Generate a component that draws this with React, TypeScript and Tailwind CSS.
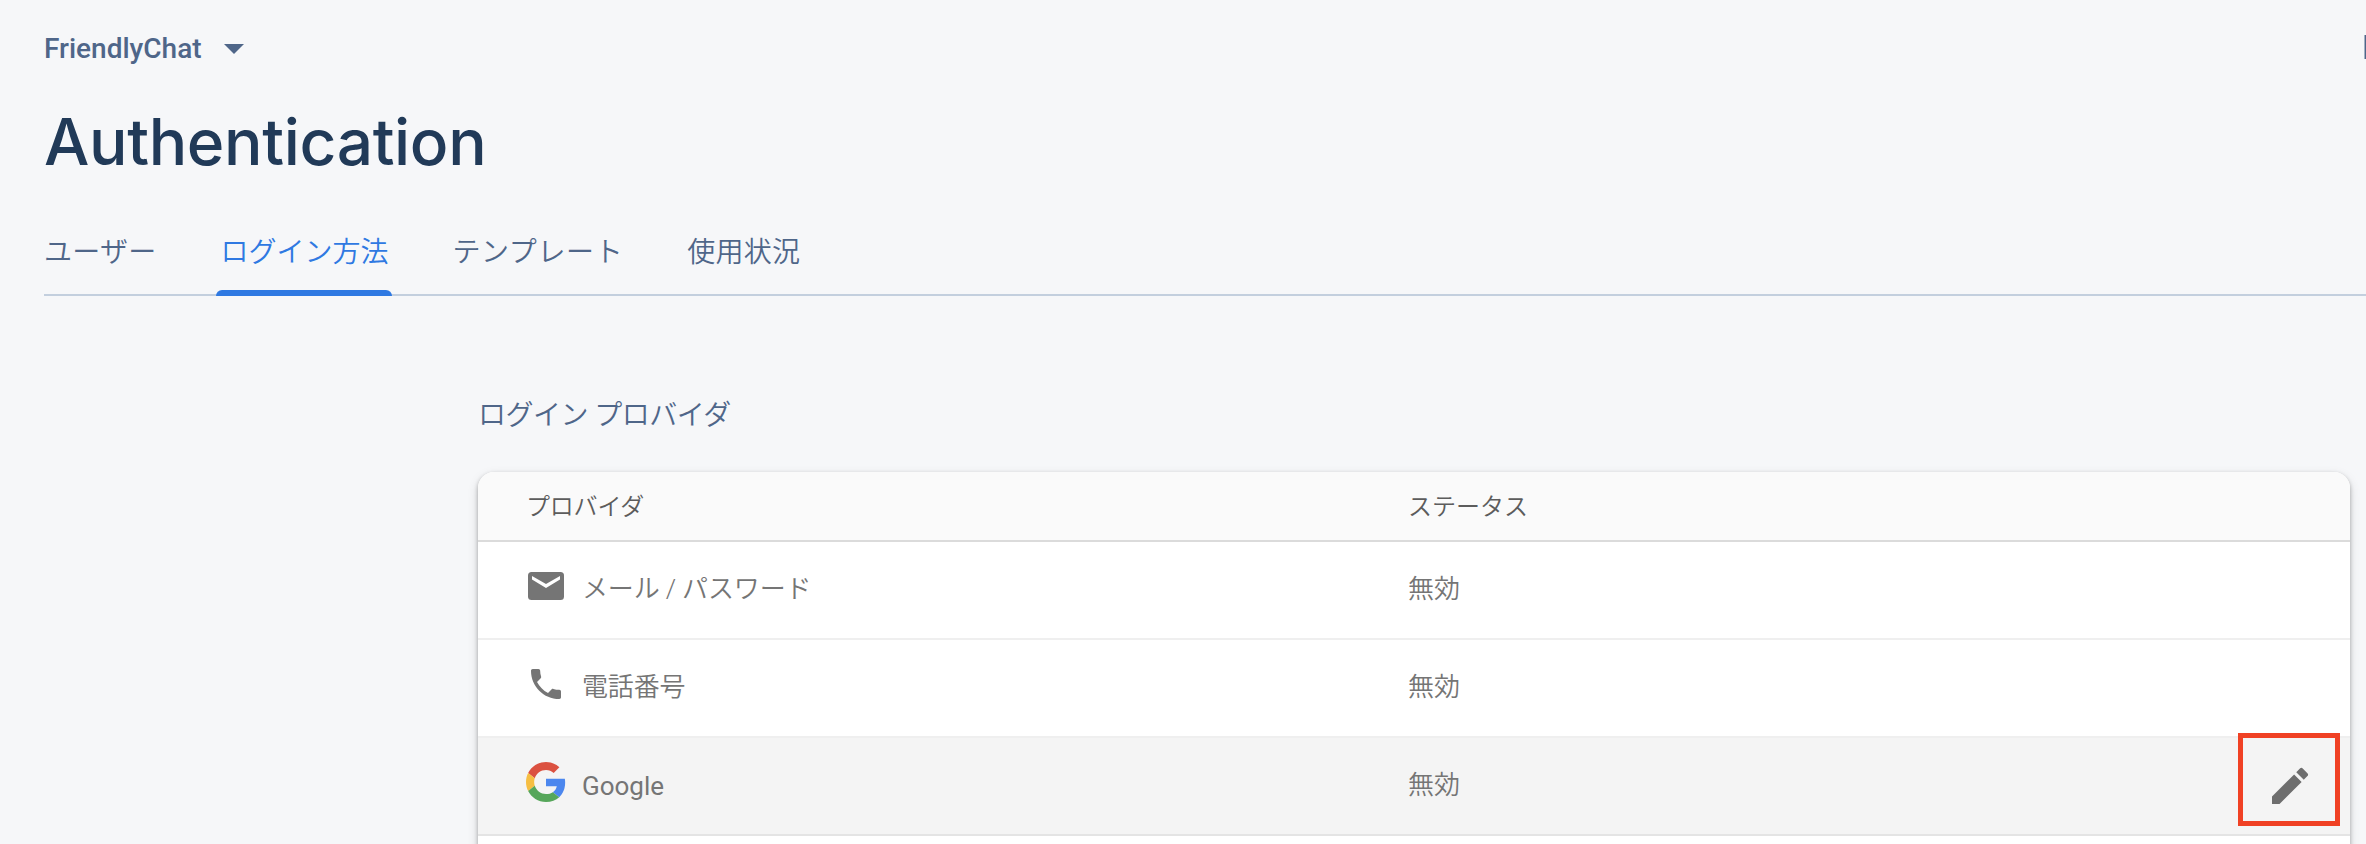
import type { ReactNode } from "react";
import clsx from "clsx";

type Tab = {
  label: string;
  active?: boolean;
  className?: string;
};

type Provider = {
  name: string;
  status: string;
  icon: ReactNode;
  hovered?: boolean;
};

const TABS: Tab[] = [
  { label: "ユーザー", className: "tracking-[0.25px]" },
  { label: "ログイン方法", active: true },
  { label: "テンプレート", className: "tracking-[0.6px]" },
  { label: "使用状況", className: "tracking-[0.25px]" },
];

function MailIcon() {
  return (
    <svg viewBox="0 0 36 28" className="h-7 w-9" aria-hidden>
      <rect width="36" height="28" rx="3.5" fill="#757575" />
      <path d="M4 4v3.6l14 8.4 14-8.4V4l-14 8z" fill="#fff" />
    </svg>
  );
}

function PhoneIcon() {
  return (
    <svg viewBox="3 3 18 18" className="size-[30px] fill-[#757575]" aria-hidden>
      <path d="M6.62 10.79c1.44 2.83 3.76 5.14 6.59 6.59l2.2-2.2c.27-.27.67-.36 1.02-.24 1.12.37 2.33.57 3.57.57.55 0 1 .45 1 1V20c0 .55-.45 1-1 1-9.39 0-17-7.61-17-17 0-.55.45-1 1-1h3.5c.55 0 1 .45 1 1 0 1.25.2 2.45.57 3.57.11.35.03.74-.25 1.02l-2.2 2.2z" />
    </svg>
  );
}

function GoogleIcon() {
  return (
    <svg viewBox="0 0 48 48" className="size-10" aria-hidden>
      <path
        fill="#db5140"
        d="M24 9.5c3.54 0 6.71 1.22 9.21 3.6l6.85-6.85C35.9 2.38 30.47 0 24 0 14.62 0 6.51 5.38 2.56 13.22l7.98 6.19C12.43 13.72 17.74 9.5 24 9.5z"
      />
      <path
        fill="#4c87ee"
        d="M46.98 24.55c0-1.57-.15-3.09-.38-4.55H24v9.02h12.94c-.58 2.96-2.26 5.48-4.78 7.18l7.73 6c4.51-4.18 7.09-10.36 7.09-17.65z"
      />
      <path
        fill="#f6be42"
        d="M10.53 28.59c-.48-1.45-.76-2.99-.76-4.59s.27-3.14.76-4.59l-7.98-6.19C.92 16.46 0 20.12 0 24c0 3.88.92 7.54 2.56 10.78l7.97-6.19z"
      />
      <path
        fill="#56a65a"
        d="M24 48c6.48 0 11.93-2.13 15.89-5.81l-7.73-6c-2.15 1.45-4.92 2.3-8.16 2.3-6.26 0-11.57-4.22-13.47-9.91l-7.98 6.19C6.51 42.62 14.62 48 24 48z"
      />
    </svg>
  );
}

function EditIcon() {
  return (
    <svg viewBox="0 0 24 24" className="size-12 fill-[#6e6e6e]" aria-hidden>
      <path d="M3 17.25V21h3.75L17.81 9.94l-3.75-3.75L3 17.25zM20.71 7.04a.996.996 0 0 0 0-1.41l-2.34-2.34a.996.996 0 0 0-1.41 0l-1.83 1.83 3.75 3.75 1.83-1.83z" />
    </svg>
  );
}

const PROVIDERS: Provider[] = [
  { name: "メール / パスワード", status: "無効", icon: <MailIcon /> },
  { name: "電話番号", status: "無効", icon: <PhoneIcon /> },
  { name: "Google", status: "無効", icon: <GoogleIcon />, hovered: true },
];

function ProviderRow({ name, status, icon, hovered }: Provider) {
  return (
    <div
      className={clsx(
        "relative flex h-[98px] border-b-2 pl-12",
        hovered ? "border-[#e4e4e4] bg-[#f4f4f4]" : "border-[#efefef] bg-white",
      )}
    >
      <div className="flex w-[882px] items-center">
        <div className="mb-[8px] flex w-10 shrink-0 justify-center">{icon}</div>
        <span className={clsx("ml-4", !hovered && "mb-[2px] font-[350] tracking-[-0.15px]")}>{name}</span>
      </div>
      <span className="flex flex-1 items-center pb-[2px] font-[350]">{status}</span>
      {hovered && (
        <>
          <button type="button" className="mt-6 mr-9 size-12" aria-label="編集">
            <EditIcon />
          </button>
          <div className="pointer-events-none absolute -top-[5px] right-[10px] h-[93px] w-[102px] border-[5px] border-[#f04124]" />
        </>
      )}
    </div>
  );
}

export default function App() {
  return (
    <div className="h-[844px] w-[2366px] overflow-hidden bg-[#f6f7f9] font-[Roboto,'Noto_Sans_CJK_JP',sans-serif] text-[#4f6689]">
      <header className="pl-11">
        <div className="flex h-24 items-center justify-between">
          <button type="button" className="flex items-center pt-[2px] text-[28px] font-medium">
            FriendlyChat
            <svg viewBox="0 0 20 10" className="ml-[22px] h-[10px] w-5 fill-current" aria-hidden>
              <path d="M0 0h20L10 10z" />
            </svg>
          </button>
          <span className="mb-[2px] h-6 w-[2px] border-l border-[#a3b0c3] bg-[#4f6689]" />
        </div>
        <h1 className="h-[126px] pt-[10px] font-[Inter,sans-serif] text-[64px] leading-[72px] font-medium tracking-[-0.35px] text-[#213a58]">
          Authentication
        </h1>
        <nav className="flex h-[74px] gap-14 border-b-2 border-[#c3cfde] text-[28px] font-[350]">
          {TABS.map((tab) => (
            <div
              key={tab.label}
              className={clsx(
                "relative h-[74px] px-1 pt-[10px] leading-[42px] first:pl-0",
                tab.active && "text-[#2f79e2]",
                tab.className,
              )}
            >
              {tab.label}
              {tab.active && (
                <span className="absolute inset-x-0 bottom-0 h-[6px] rounded-t-[6px] bg-[#2f79e2]" />
              )}
            </div>
          ))}
        </nav>
      </header>

      <main className="pt-[94px] pl-[478px]">
        <h2 className="h-[82px] pt-[2px] text-[28px] leading-[48px] font-[350] tracking-[-0.5px]">
          ログイン プロバイダ
        </h2>
        <section className="h-[420px] w-[1872px] overflow-hidden rounded-t-[16px] bg-white text-[26px] text-[#757575] shadow-[0_2px_4px_rgba(0,0,0,0.3),0_4px_12px_rgba(0,0,0,0.12)]">
          <div className="flex h-[70px] items-center border-b-2 border-[#dbdbdb] bg-[#fafafa] pt-[2px] pl-12 text-[24px] font-[350] text-[#5c5c5c]">
            <span className="w-[882px] tracking-[-0.2px]">プロバイダ</span>
            <span>ステータス</span>
          </div>
          {PROVIDERS.map((provider) => (
            <ProviderRow key={provider.name} {...provider} />
          ))}
        </section>
      </main>
    </div>
  );
}
